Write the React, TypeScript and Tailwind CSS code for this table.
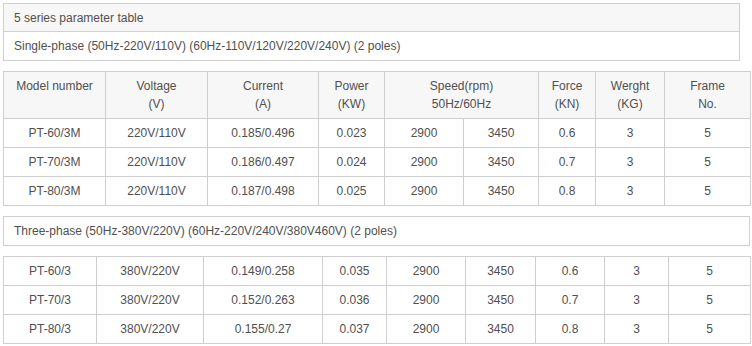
const single = [
  ['PT-60/3M', '220V/110V', '0.185/0.496', '0.023', '2900', '3450', '0.6', '3', '5'],
  ['PT-70/3M', '220V/110V', '0.186/0.497', '0.024', '2900', '3450', '0.7', '3', '5'],
  ['PT-80/3M', '220V/110V', '0.187/0.498', '0.025', '2900', '3450', '0.8', '3', '5'],
];

const three = [
  ['PT-60/3', '380V/220V', '0.149/0.258', '0.035', '2900', '3450', '0.6', '3', '5'],
  ['PT-70/3', '380V/220V', '0.152/0.263', '0.036', '2900', '3450', '0.7', '3', '5'],
  ['PT-80/3', '380V/220V', '0.155/0.27', '0.037', '2900', '3450', '0.8', '3', '5'],
];

const cols1 = [102, 102, 111, 66, 79, 75, 57, 69, 86];
const cols2 = [93, 107, 119, 64, 79, 70, 69, 64, 82];

function Rows({ rows }: { rows: string[][] }) {
  return (
    <>
      {rows.map((r, i) => (
        <tr key={i} className="h-[29px]">
          {r.map((c, j) => (
            <td key={j} className="border border-[#cfcfcf] text-center p-0 align-middle">
              {c}
            </td>
          ))}
        </tr>
      ))}
    </>
  );
}

export default function App() {
  const th = 'border border-[#cfcfcf] text-center align-top font-normal pt-[5px] pb-[5px] leading-[18px]';
  return (
    <div
      className="bg-white p-[3px] text-[12px] text-[#505050]"
      style={{ fontFamily: '"Liberation Sans", Arial, sans-serif' }}
    >
      <div className="w-[737px] border border-[#cfcfcf]">
        <div className="h-[28px] bg-[#f7f7f7] border-b border-[#cfcfcf] px-[10px] flex items-center">
          5 series parameter table
        </div>
        <div className="h-[28px] px-[10px] flex items-center">
          Single-phase (50Hz-220V/110V) (60Hz-110V/120V/220V/240V) (2 poles)
        </div>
      </div>

      <table className="mt-[10px] w-[747px] table-fixed border-collapse">
        <colgroup>
          {cols1.map((w, i) => (
            <col key={i} style={{ width: w }} />
          ))}
        </colgroup>
        <thead>
          <tr className="bg-[#f7f7f7] h-[47px]">
            <th className={th}>Model number</th>
            <th className={th}>
              Voltage
              <br />
              (V)
            </th>
            <th className={th}>
              Current
              <br />
              (A)
            </th>
            <th className={th}>
              Power
              <br />
              (KW)
            </th>
            <th className={th} colSpan={2}>
              Speed(rpm)
              <br />
              50Hz/60Hz
            </th>
            <th className={th}>
              Force
              <br />
              (KN)
            </th>
            <th className={th}>
              Werght
              <br />
              (KG)
            </th>
            <th className={th}>
              Frame
              <br />
              No.
            </th>
          </tr>
        </thead>
        <tbody>
          <Rows rows={single} />
        </tbody>
      </table>

      <div className="mt-[10px] w-[747px] h-[30px] border border-[#cfcfcf] px-[10px] flex items-center">
        Three-phase (50Hz-380V/220V) (60Hz-220V/240V/380V460V) (2 poles)
      </div>

      <table className="mt-[10px] w-[747px] table-fixed border-collapse">
        <colgroup>
          {cols2.map((w, i) => (
            <col key={i} style={{ width: w }} />
          ))}
        </colgroup>
        <tbody>
          <Rows rows={three} />
        </tbody>
      </table>
    </div>
  );
}
